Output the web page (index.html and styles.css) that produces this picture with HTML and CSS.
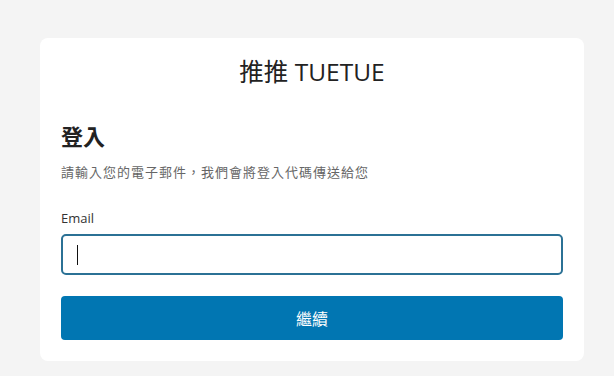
FILE: index.html
```html
<!DOCTYPE html>
<html lang="zh-Hant">
<head>
<meta charset="utf-8">
<title>推推 TUETUE - 登入</title>
<link rel="stylesheet" href="styles.css">
</head>
<body>
<main class="card">
  <h1 class="brand">推推 TUETUE</h1>
  <h2 class="heading">登入</h2>
  <p class="subtitle">請輸入您的電子郵件，我們會將登入代碼傳送給您</p>
  <form class="form">
    <label class="label" for="email">Email</label>
    <div class="input"><span class="caret"></span></div>
    <button class="btn" type="button">繼續</button>
  </form>
</main>
</body>
</html>
```

FILE: styles.css
```css
html, body {
  margin: 0;
  padding: 0;
  background: #f4f4f4;
}
body {
  padding: 38px 30px 0 40px;
  font-family: "Open Sans", "Noto Sans CJK TC", sans-serif;
  color: #222;
}
.card {
  box-sizing: border-box;
  width: 544px;
  background: #ffffff;
  border-radius: 8px;
  padding: 19px 21px 21px 21px;
}
.brand {
  margin: 0;
  text-align: center;
  font-size: 24.5px;
  line-height: 30px;
  font-weight: 400;
  color: #222;
}
.heading {
  margin: 34px 0 0 0;
  font-size: 22px;
  line-height: 30px;
  font-weight: 700;
  color: #222;
}
.subtitle {
  margin: 11px 0 0 0;
  font-size: 13px;
  line-height: 20px;
  color: #666;
  letter-spacing: 1px;
}
.form {
  display: flex;
  flex-direction: column;
  margin: 0;
}
.label {
  margin-top: 27px;
  font-size: 13px;
  line-height: 18px;
  color: #333;
}
.input {
  box-sizing: border-box;
  margin-top: 7px;
  height: 41px;
  border: 2px solid #2b7195;
  border-radius: 5px;
  display: flex;
  align-items: center;
  padding-left: 14px;
}
.caret {
  width: 1px;
  height: 20px;
  background: #111;
}
.btn {
  margin-top: 21px;
  height: 44px;
  border: 0;
  border-radius: 4px;
  background: #0176b2;
  color: #fff;
  font-family: "Open Sans", "Noto Sans CJK TC", sans-serif;
  font-size: 16px;
  padding: 0;
}
```
